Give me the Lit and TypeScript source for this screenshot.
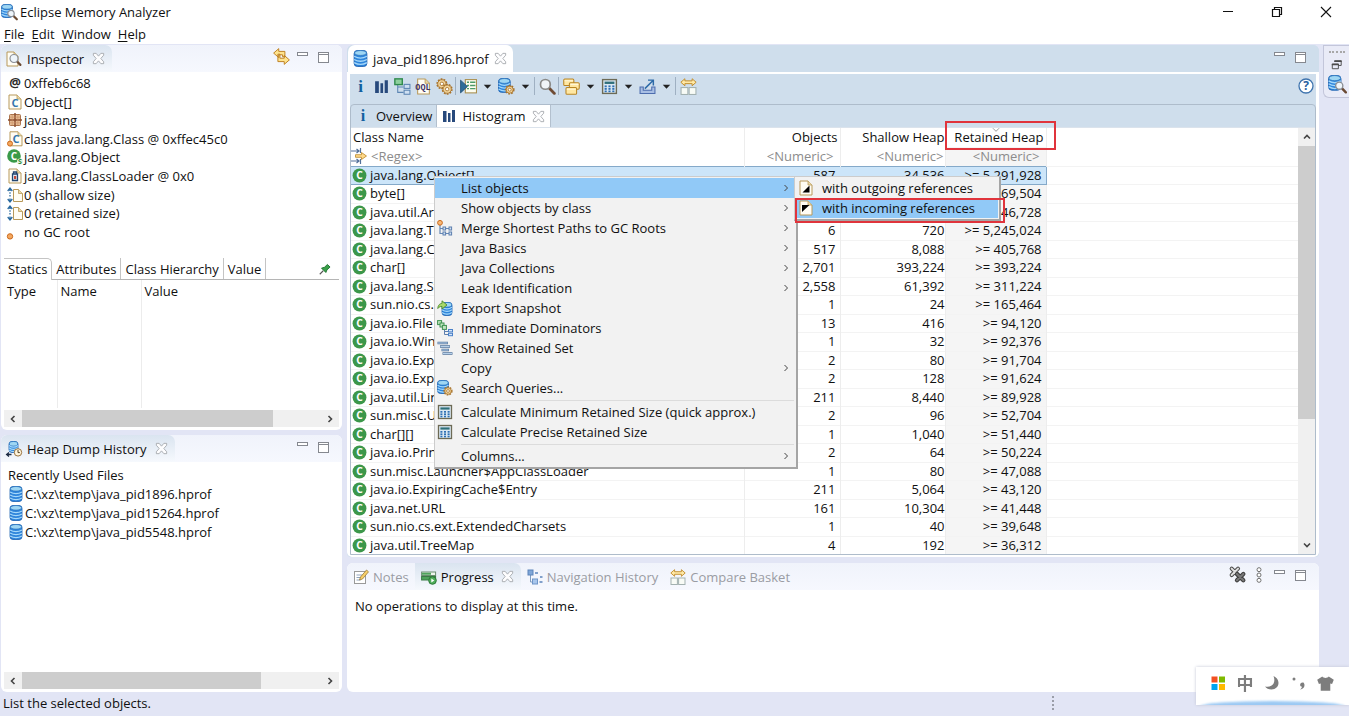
import { LitElement, html, css, svg, nothing } from "lit";
import { customElement, property } from "lit/decorators.js";

const cyl = (x: number, y: number, w: number, h: number) => svg`
  <rect x=${x} y=${y} width=${w} height=${h} rx="3" fill="#2f86dc" stroke="#1c5fae" stroke-width=".8"/>
  <ellipse cx=${x + w / 2} cy=${y + 2.3} rx=${w / 2 - 0.3} ry="2.3" fill="#9ed6f3" stroke="#2a73bd" stroke-width=".7"/>
  <path d=${`M${x} ${y + h * 0.36}q${w / 2} 3.4 ${w} 0M${x} ${y + h * 0.56}q${w / 2} 3.4 ${w} 0M${x} ${y + h * 0.76}q${w / 2} 3.4 ${w} 0`} fill="none" stroke="#a5d8fa" stroke-width="1.2"/>`;

const gear = (x: number, y: number, r: number) => svg`
  <circle cx=${x} cy=${y} r=${r} fill="none" stroke="#a8732c" stroke-width="2" stroke-dasharray="1.6 1"/>
  <circle cx=${x} cy=${y} r=${r - 0.3} fill="#f1d49a" stroke="#a8732c" stroke-width=".8"/>
  <circle cx=${x} cy=${y} r=${r / 2.6} fill="#fff" stroke="#a8732c" stroke-width=".8"/>`;

const lens = (x: number, y: number, r: number) => svg`
  <path d=${`M${x + r * 0.7} ${y + r * 0.7}l3.6 3.6`} stroke="#6b4a33" stroke-width="2.2" stroke-linecap="round"/>
  <circle cx=${x} cy=${y} r=${r} fill="#eef5fb" stroke="#8b8f96" stroke-width="1.2"/>`;

const page = (x: number, y: number, w: number, h: number) => svg`
  <path d=${`M${x} ${y}h${w - 4}l4 4v${h - 4}h-${w}z`} fill="#fffdf4" stroke="#b8995a"/>
  <path d=${`M${x + w - 4} ${y}v4h4`} fill="#ead9a8" stroke="#b8995a" stroke-width=".8"/>`;

const calc = svg`
  <rect x="1.5" y="1.5" width="13" height="13" fill="#d9e7f2" stroke="#6d6a55" stroke-width="1.3"/>
  <rect x="3.4" y="3.4" width="9.2" height="2.2" fill="#2f6f7a"/>
  <g fill="#2e6fb3"><rect x="3.4" y="7" width="2" height="1.7"/><rect x="7" y="7" width="2" height="1.7"/><rect x="10.6" y="7" width="2" height="1.7"/><rect x="3.4" y="9.4" width="2" height="1.7"/><rect x="7" y="9.4" width="2" height="1.7"/><rect x="10.6" y="9.4" width="2" height="1.7"/><rect x="3.4" y="11.8" width="2" height="1.5"/><rect x="7" y="11.8" width="2" height="1.5"/><rect x="10.6" y="11.8" width="2" height="1.5"/></g>`;

const compare = svg`
  <path d="M.8 4 4.6.7v2h6.8v-2L15.2 4l-3.8 3.3v-2H4.6v2z" fill="#ffe9a6" stroke="#bf8a2a" stroke-width=".9"/>
  <rect x="1" y="9" width="6.4" height="6.5" fill="#f8fbf6" stroke="#a3b1b0"/><rect x="8.6" y="9" width="6.4" height="6.5" fill="#f8fbf6" stroke="#a3b1b0"/>`;

const ICONS: Record<string, unknown> = {
  app: svg`${cyl(0.5, 0.5, 11, 13)}${lens(10, 9.5, 3.2)}`,
  db: svg`${cyl(2, 0.5, 12, 15)}`,
  dbGear: svg`${cyl(0.5, 0.5, 11, 13)}${gear(11, 11, 3.6)}`,
  dbExport: svg`${cyl(5, 2.5, 10, 13)}<path d="M.8 8.5C1 4.8 3 3.6 5 3.4V.8l5 4.2-5 4V6.4C3.2 6.4 2 7 .8 8.5z" fill="#a9d86a" stroke="#4c8b2c" stroke-width=".9"/>`,
  dbClock: svg`${cyl(3, 0.5, 9, 11)}<circle cx="12" cy="11.4" r="3.7" fill="#fff5dd" stroke="#9a7440"/><path d="M12 9v2.6h1.8" fill="none" stroke="#54401f"/><path d="M.5 13.5h5M3 11.4.6 13.5 3 15.6" fill="none" stroke="#1d2c44" stroke-width="1.3"/>`,
  inspect: svg`${page(1, 1, 11, 14)}${lens(8, 7.5, 4)}`,
  at: svg`<text x="8" y="12.2" text-anchor="middle" font-size="13" font-weight="700" font-family="Open Sans, sans-serif" fill="#2a2a2a">@</text>`,
  classDoc: svg`${page(2, 1, 12, 14)}<text x="8" y="12.8" text-anchor="middle" font-size="11" font-weight="700" font-family="Open Sans, sans-serif" fill="#3476ae">C</text>`,
  pkg: svg`<rect x="2.5" y="2.5" width="11" height="11" rx="1" fill="#e6bd95" stroke="#a9714a"/><path d="M8 1v14M1 8h14" stroke="#8d4f30" stroke-width="1.5"/><path d="M5.2 2.5v11M10.8 2.5v11M2.5 5.2h11M2.5 10.8h11" stroke="#c98f64" stroke-width=".6"/>`,
  classObj: svg`${page(3, 0.8, 12, 14)}<text x="9" y="12" text-anchor="middle" font-size="11" font-weight="700" font-family="Open Sans, sans-serif" fill="#3476ae">C</text><circle cx="3" cy="12.6" r="2.5" fill="#f4a860" stroke="#cc6a1c"/>`,
  superC: svg`<circle cx="7" cy="7" r="6.8" fill="#3a9a48"/><text x="7" y="10.6" text-anchor="middle" font-size="10" font-weight="700" font-family="Open Sans, sans-serif" fill="#fff">C</text><circle cx="13" cy="12.4" r="3" fill="#e4f6e0"/><text x="13" y="15" text-anchor="middle" font-size="7" font-weight="700" font-family="Open Sans, sans-serif" fill="#2f8a3d">S</text>`,
  greenC: svg`<circle cx="8" cy="8" r="7.4" fill="#3c974a"/><text x="8" y="12" text-anchor="middle" font-size="11" font-weight="700" font-family="Open Sans, sans-serif" fill="#fff">C</text>`,
  loader: svg`${page(2, 1, 12, 14)}<path d="M5.5 6h5v6.500h-5zM6.500 4h3v2h-3z" fill="#dcebf7" stroke="#23466f" stroke-width="1.300"/><rect x="7" y="8" width="2.200" height="3" fill="#c24a3a"/>`,
  size: svg`<path d="M3 1v3M3 5.200v1.600M3 8v1.600M3 11.500v3.500M.7 4 3 1l2.300 3M.7 12 3 15l2.300-3" fill="none" stroke="#2a6aa0" stroke-width="1.300"/>${page(6.5, 2.5, 9, 12)}`,
  root: svg`<circle cx="3" cy="12.400" r="2.700" fill="#f4a860" stroke="#cc6a1c"/>`,
  sync: svg`<path d="M.6 4.800 5.400.6v2.600h5.800v5H9V6.400H5.400V9zM15.400 11.200l-4.800-4.200v2.600H6.500V5.800H4.600v7h6v2.600z" fill="#ffe48e" stroke="#bd7f1d" stroke-width=".9"/>`,
  pin: svg`<path d="M2 14 6 10" stroke="#555" stroke-width="1.300"/><path d="m4 7 5 5 1.200-3 3.600-3.200-3-3L7.400 6z" fill="#3aa04a" stroke="#1c6f2c"/>`,
  min: svg`<rect x="2.500" y="3.500" width="10" height="3" fill="#fff" stroke="#85888f"/>`,
  max: svg`<rect x="2.500" y="3.500" width="10" height="10" fill="#fff" stroke="#85888f"/><path d="M2.500 5.500h10" stroke="#85888f"/>`,
  close: svg`<path d="M2.500 2.500h3L8 5.500l2.500-3h3v2L10.500 8l3 3.500v2h-3L8 10.500l-2.500 3h-3v-2l3-3.500-3-3.500z" fill="#fdfdfe" stroke="#a0a4a9" stroke-width=".9"/>`,
  info: svg`<text x="8" y="13" text-anchor="middle" font-size="16" font-weight="700" font-family="Liberation Serif, serif" fill="#12609f">i</text>`,
  bars: svg`<path d="M2 3h3.500v11H2zM7 5h2.500v9H7zM11 2h3v12h-3z" fill="#27497c"/>`,
  tree: svg`<path d="M3.500 6v7.500H9M3.500 8.500H9" fill="none" stroke="#5d86b3"/><rect x=".8" y=".8" width="7" height="5.400" fill="#8fd09d" stroke="#2f8a4c" stroke-width="1.300"/><rect x="9.500" y="6" width="5.500" height="3.800" fill="#cfe0f2" stroke="#5d86b3"/><rect x="9.500" y="11.500" width="5.500" height="3.800" fill="#cfe0f2" stroke="#5d86b3"/>`,
  oql: svg`${page(2.5, 1, 11, 14)}<text x="7.500" y="11.500" text-anchor="middle" font-size="8" font-weight="700" font-family="Liberation Mono, monospace" fill="#3d3268">OQL</text>`,
  gears: svg`${gear(5.5, 5.5, 4.2)}${gear(10.5, 10.5, 4.2)}`,
  run: svg`<rect x="5" y="1.500" width="10.500" height="12.500" fill="#fdfdf0" stroke="#a98f4e"/><path d="M6.500 4h2M9.500 4h5M6.500 7h2M9.500 7h5M6.500 10h2M9.500 10h5" stroke="#4c9a68" stroke-width="1.300"/><path d="M.5 2v12L7 8z" fill="#2f6c98" stroke="#1b4a72" stroke-width=".7"/>`,
  search: svg`<path d="m9.500 9.500 5 5" stroke="#6f4b34" stroke-width="2.600" stroke-linecap="round"/><circle cx="6" cy="6" r="4.600" fill="#f1f5f8" stroke="#8a8a88" stroke-width="1.600"/>`,
  group: svg`<g fill="#ffe7a2" stroke="#b98524"><rect x=".7" y="1" width="9.500" height="6" rx="1"/><rect x="6" y="4.500" width="9.300" height="6" rx="1"/><rect x="2.800" y="9" width="10" height="6.300" rx="1"/></g><path d="M1.500 2.500h8M7 6h7.500M3.600 10.600h8.400" stroke="#fff6d8"/>`,
  calc,
  exp: svg`<path d="M1 8.500h3v3h8v-3h3v6H1z" fill="#a9bfe4" stroke="#4d6dae"/><path d="m5.500 10 7.500-7.500M8.500 2h5v5" fill="none" stroke="#2d6aa8" stroke-width="1.400"/>`,
  compare,
  help: svg`<circle cx="8" cy="8" r="7" fill="#fff" stroke="#3f74ae" stroke-width="1.300"/><text x="8" y="12.300" text-anchor="middle" font-size="12" font-weight="700" font-family="Open Sans, sans-serif" fill="#2a62a2">?</text>`,
  filter: svg`<path d="M0 3h8M5.500 1 8 3 5.500 5M9.500 0v5M0 13h8M5.500 11 8 13l-2.500 2M9.500 11v5" fill="none" stroke="#54719b" stroke-width="1.200"/><path d="M4.500 6.700h6V4.500L15.500 8l-5 3.500V9.300h-6z" fill="#ffd98a" stroke="#b98524" stroke-width=".8"/>`,
  merge: svg`<path d="M3 5v8.500h11M3 8.500h11" fill="none" stroke="#6487b5" stroke-width="1.200"/><g fill="#cfe0f2" stroke="#5d7fae"><rect x="6" y="7" width="2.600" height="3"/><rect x="12" y="7" width="2.600" height="3"/><rect x="6" y="12" width="2.600" height="3"/><rect x="12" y="12" width="2.600" height="3"/></g><circle cx="3" cy="2.800" r="2.400" fill="#f7b877" stroke="#cc6a1c"/>`,
  dominators: svg`<g fill="#bfe6bf" stroke="#3d9150"><rect x=".6" y=".6" width="4" height="4"/><rect x="3" y="3" width="4" height="4"/><rect x="5.400" y="5.400" width="4" height="4"/></g><path d="M7.500 9.500v5H11M7.500 11.500H11" fill="none" stroke="#5d7fae"/><g fill="#d5e6fa" stroke="#4a80c8"><rect x="11.500" y="9.500" width="4" height="2.400"/><rect x="11.500" y="13.300" width="4" height="2.400"/></g>`,
  retained: svg`<path d="M.5 3h10.500M3 6.500h10M4.500 10h7.500M5.500 13.500h10" stroke="#54759d" stroke-width="2.600"/><path d="M1 3h9.500M3.500 6.500h9M5 10h6.500M6 13.500h9" stroke="#b5d0ea" stroke-width="1"/>`,
  outgoing: svg`${page(2, 1, 12, 14)}<path d="M11.500 5.500v7h-7z" fill="#000"/>`,
  incoming: svg`${page(2, 1, 12, 14)}<path d="M4 5h7.500L4 12z" fill="#000"/>`,
  notes: svg`<rect x="1.500" y="2.500" width="11" height="12" fill="#fff" stroke="#9a9a9a"/><path d="M3.500 6h6M3.500 8.500h5M3.500 11h4" stroke="#8fa3bd"/><path d="m6.500 11 1-3L13.500 1l2 1.800L9.500 10z" fill="#f7cf6a" stroke="#9a7a35" stroke-width=".8"/>`,
  progress: svg`<rect x=".6" y="3" width="14" height="3.500" fill="#eef6ee" stroke="#6b8d70"/><rect x=".6" y="7.500" width="14" height="3.500" fill="#4fa35c" stroke="#3a7b46"/><path d="M1 4.700h9" stroke="#4fa35c" stroke-width="2"/><circle cx="11.500" cy="11.500" r="3.800" fill="#4fae5a" stroke="#2c7a38"/><path d="M10.300 9.500v4l3-2z" fill="#fff"/>`,
  nav: svg`<path d="M3.500 4v9H7" fill="none" stroke="#7f9cc0"/><rect x="1" y="1" width="5" height="5" fill="#7fa6d8" stroke="#5c84ba"/><rect x="5.500" y="10" width="5" height="5" fill="#a8c6ec" stroke="#6f95c8"/><path d="M8 4h3M13 8h2.500M12.500 13h3" stroke="#5c84ba" stroke-width="1.500"/>`,
  clearAll: svg`<g stroke-linecap="round" fill="none"><path d="m2.500 2.500 6 6M8.500 2.500l-6 6" stroke="#4d4d4d" stroke-width="3.800"/><path d="m2.500 2.500 6 6M8.500 2.500l-6 6" stroke="#e0e0e0" stroke-width="1.900"/><path d="m7.500 7.500 6 6M13.500 7.500l-6 6" stroke="#3f3f3f" stroke-width="4"/><path d="m7.500 7.500 6 6M13.500 7.500l-6 6" stroke="#787878" stroke-width="2"/></g>`,
  dots: svg`<g fill="#fff" stroke="#707070"><circle cx="8" cy="2.700" r="2"/><circle cx="8" cy="8" r="2"/><circle cx="8" cy="13.300" r="2"/></g>`,
  restoreSmall: svg`<path d="M6 4h7v5h-3M3.500 7.500h6.500v5H3.500z" fill="none" stroke="#4c4c4c"/><path d="M5.500 4.500h8M3 8h7.500" stroke="#4c4c4c" stroke-width="1.800"/>`,
  winMin: svg`<path d="M3 7.500h10" stroke="#111"/>`,
  winMax: svg`<path d="M3.500 5.500h7v7h-7zM5.500 5V3.500h7v7H11" fill="none" stroke="#111" stroke-width="1.200"/>`,
  winClose: svg`<path d="m3 3 10 10M13 3 3 13" stroke="#111" stroke-width="1.100"/>`,
  left: svg`<path d="M9.500 5 6.500 8l3 3" fill="none" stroke="#444" stroke-width="1.600"/>`,
  right: svg`<path d="m6.500 5 3 3-3 3" fill="none" stroke="#444" stroke-width="1.600"/>`,
  up: svg`<path d="m5 9.500 3-3 3 3" fill="none" stroke="#444" stroke-width="1.600"/>`,
  down: svg`<path d="m5 6.500 3 3 3-3" fill="none" stroke="#444" stroke-width="1.600"/>`,
  sub: svg`<path d="m6.500 5 3 3-3 3" fill="none" stroke="#444"/>`,
  drop: svg`<path d="M4 6h8l-4 4.500z" fill="#222"/>`,
  sort: svg`<path d="m4.500 6 3.500 3.500L11.500 6" fill="none" stroke="#8a8a8a"/>`,
  squares: svg`<path d="M1.500 1.500h6v6h-6z" fill="#f25022"/><path d="M9 1.500h6v6H9z" fill="#7fba00"/><path d="M1.500 9h6v6h-6z" fill="#00a4ef"/><path d="M9 9h6v6H9z" fill="#ffb900"/>`,
  moon: svg`<path d="M9.500 1c7 3 7 13-2 13.500-3 0-5-1-6.500-3 8 1.500 11-4.500 8.500-10.500z" fill="#7d7d7d"/>`,
  comma: svg`<circle cx="3" cy="4" r="1.500" fill="#7d7d7d"/><path d="M12.500 7.500c2.500 3 0 7-3.500 7 1.500-1 2-1.800 1.800-2.900-3-.6-1.700-5 1.700-4.100z" fill="#7d7d7d"/>`,
  shirt: svg`<path d="M5 1.500c1.500 1.800 4.500 1.800 6 0l4.800 3-1.600 4-1.700-.6v7h-9v-7l-1.700.6-1.600-4z" fill="#7d7d7d"/>`,
};

const icon = (name: string, size = 16) =>
  html`<svg class="ico" width=${size} height=${size} viewBox="0 0 16 16" aria-hidden="true">${ICONS[name]}</svg>`;

const base = css`
  * { box-sizing: border-box; }
  .ico { display: block; flex: none; overflow: visible; }
  button {
    font: inherit; color: inherit; background: none; border: 0; padding: 0; margin: 0;
    display: flex; align-items: center; white-space: nowrap;
  }
`;

@customElement("scroll-track")
export class ScrollTrack extends LitElement {
  @property({ type: Boolean, reflect: true }) vertical = false;
  @property({ type: Number }) size = 50;

  static styles = [base, css`
    :host { display: flex; height: 17px; flex: none; background: #f0f0f0; }
    :host([vertical]) { flex-direction: column; width: 17px; height: auto; }
    button { width: 18px; height: 17px; justify-content: center; flex: none; }
    :host([vertical]) button { width: 17px; height: 18px; }
    .lane { flex: 1; min-width: 0; min-height: 0; }
    .thumb { background: #cdcdcd; width: 100%; height: 100%; }
  `];

  render() {
    const style = this.vertical ? `height:${this.size}%` : `width:${this.size}%`;
    return html`
      <button aria-label="Scroll back">${icon(this.vertical ? "up" : "left")}</button>
      <div class="lane"><div class="thumb" style=${style}></div></div>
      <button aria-label="Scroll forward">${icon(this.vertical ? "down" : "right")}</button>`;
  }
}

type Row = [string, string, string, string];
const ROWS: Row[] = [
  ["java.lang.Object[]", "587", "34,536", "5,291,928"],
  ["byte[]", "1,204", "69,504", "5,269,504"],
  ["java.util.ArrayList", "42", "1,008", "5,246,728"],
  ["java.lang.Thread", "6", "720", "5,245,024"],
  ["java.lang.Class", "517", "8,088", "405,768"],
  ["char[]", "2,701", "393,224", "393,224"],
  ["java.lang.String", "2,558", "61,392", "311,224"],
  ["sun.nio.cs.ext.GBK", "1", "24", "165,464"],
  ["java.io.File", "13", "416", "94,120"],
  ["java.io.WinNTFileSystem", "1", "32", "92,376"],
  ["java.io.ExpiringCache", "2", "80", "91,704"],
  ["java.io.ExpiringCache$1", "2", "128", "91,624"],
  ["java.util.LinkedHashMap$Entry", "211", "8,440", "89,928"],
  ["sun.misc.URLClassPath", "2", "96", "52,704"],
  ["char[][]", "1", "1,040", "51,440"],
  ["java.io.PrintStream", "2", "64", "50,224"],
  ["sun.misc.Launcher$AppClassLoader", "1", "80", "47,088"],
  ["java.io.ExpiringCache$Entry", "211", "5,064", "43,120"],
  ["java.net.URL", "161", "10,304", "41,448"],
  ["sun.nio.cs.ext.ExtendedCharsets", "1", "40", "39,648"],
  ["java.util.TreeMap", "4", "192", "36,312"],
];

interface Item { label?: string; icon?: string; sub?: boolean; active?: boolean; }
const MENU: Item[] = [
  { label: "List objects", sub: true, active: true },
  { label: "Show objects by class", sub: true },
  { label: "Merge Shortest Paths to GC Roots", icon: "merge", sub: true },
  { label: "Java Basics", sub: true },
  { label: "Java Collections", sub: true },
  { label: "Leak Identification", sub: true },
  { label: "Export Snapshot", icon: "dbExport" },
  { label: "Immediate Dominators", icon: "dominators" },
  { label: "Show Retained Set", icon: "retained" },
  { label: "Copy", sub: true },
  { label: "Search Queries...", icon: "dbGear" },
  {},
  { label: "Calculate Minimum Retained Size (quick approx.)", icon: "calc" },
  { label: "Calculate Precise Retained Size", icon: "calc" },
  {},
  { label: "Columns...", sub: true },
];

const INSPECT: [string, string][] = [
  ["at", "0xffeb6c68"],
  ["classDoc", "Object[]"],
  ["pkg", "java.lang"],
  ["classObj", "class java.lang.Class @ 0xffec45c0"],
  ["superC", "java.lang.Object"],
  ["loader", "java.lang.ClassLoader @ 0x0"],
  ["size", "0 (shallow size)"],
  ["size", "0 (retained size)"],
  ["root", "no GC root"],
];

const FILES = ["C:\\xz\\temp\\java_pid1896.hprof", "C:\\xz\\temp\\java_pid15264.hprof", "C:\\xz\\temp\\java_pid5548.hprof"];

// "|" is a separator; a trailing "+" adds a drop-down arrow.
const TOOLS = ["info", "bars", "tree", "oql", "gears", "|", "run+", "dbGear+", "|", "search", "|", "group+", "calc+", "exp+", "|", "compare"];

@customElement("app-root")
export class AppRoot extends LitElement {
  static styles = [base, css`
    :host {
      display: flex; flex-direction: column; height: 100vh; overflow: hidden;
      font: 13px/18px "Open Sans", "Noto Sans", sans-serif; color: #101010; background: #e2e5f5;
    }
    .titlebar { display: flex; align-items: center; height: 24px; background: #fff; flex: none; padding-left: 1px; gap: 3px; }
    .titlebar h1 { font: inherit; margin: 0; flex: 1; }
    .titlebar .ctl { width: 46px; height: 24px; justify-content: center; }
    .menubar { display: flex; gap: 7px; height: 20px; background: #fff; flex: none; padding-left: 4px; }
    .menubar u { text-underline-offset: 2px; }
    .work { flex: 1; min-height: 0; display: grid; grid-template-columns: 343px minmax(0, 1fr) 26px; column-gap: 4px; padding-top: 1px; }
    .left { display: grid; grid-template-rows: minmax(0, 385fr) minmax(0, 257fr); row-gap: 5px; min-height: 0; padding: 0 1px; }
    .main { display: grid; grid-template-rows: minmax(0, 512fr) minmax(0, 129fr); row-gap: 6px; min-height: 0; }
    .panel { display: flex; flex-direction: column; min-height: 0; background: #fff; border-radius: 6px; overflow: hidden; }
    .tabs { display: flex; height: 27px; flex: none; align-items: stretch; background: linear-gradient(#f0f3fb, #f6f8fe); }
    .tab { display: flex; align-items: center; padding: 0 6px; color: #9a9ca3; gap: 4px; }
    .tab.on { color: #101010; border-radius: 0 7px 0 0; background: linear-gradient(#dae4f0, #f6f9fd); }
    .tab .close { margin-left: 2px; }
    .left .tab { padding-left: 5px; gap: 5px; }
    .fill { flex: 1; }
    .winbtns { display: flex; align-items: center; gap: 5px; padding: 0 10px 4px 0; }
    .facts { display: grid; grid-template-rows: repeat(9, 1fr); height: 167px; flex: none; margin: 2px 0 0; padding: 0 0 0 6px; list-style: none; }
    .facts li, .files li { display: flex; align-items: center; gap: 1px; white-space: nowrap; }
    .facts li { padding-right: 4px; }
    .subtabs { display: flex; flex: none; height: 22px; margin: 17px 3px 0; border-bottom: 1px solid #b5b5b5; }
    .subtabs button { padding: 0 4px; border-right: 1px solid #c4c4c4; }
    .subtabs button.on { margin-bottom: -1px; padding-bottom: 2px; background: #fff; border-top: 1px solid #c4c4c4; border-radius: 0 5px 0 0; }
    .subtabs .pin { border: 0; padding-right: 7px; }
    .attrs { flex: 1; min-height: 0; margin: 0 3px; display: flex; }
    .attrs table { border-collapse: collapse; width: 100%; height: 100%; table-layout: fixed; }
    .attrs th { font-weight: 400; text-align: left; vertical-align: top; padding: 2px 3px 0; border-right: 1px solid #ececec; }
    .attrs th:last-child { border: 0; }
    .attrs .c1 { width: 53px; }
    .attrs .c2 { width: 84px; }
    .panel > scroll-track { margin: 2px 3px 3px; }
    .history { flex: 1; padding: 4px 7px 0; min-height: 0; }
    .files { display: grid; grid-auto-rows: 1fr; height: 56px; margin: 1px 0 0; padding: 0; list-style: none; }
    .editor { background: #cfdeec; border-radius: 6px 6px 4px 4px; }
    .etabs { display: flex; height: 27px; flex: none; background: #cfdeec; }
    .etab { display: flex; align-items: center; background: #fff; border-radius: 7px 7px 0 0; padding: 0 5px 0 4px; gap: 4px; margin-left: 1px; }
    .ebody { flex: 1; min-height: 0; display: flex; flex-direction: column; border: 2px solid #fff; border-left-width: 3px; border-right-width: 3px; border-radius: 0 0 5px 5px; }
    .toolbar { display: flex; align-items: center; height: 30px; flex: none; padding: 0 0 6px 0; }
    .toolbar button { width: 21px; height: 22px; justify-content: center; }
    .toolbar button.dd { width: 17px; }
    .rule { width: 3px; height: 18px; flex: none; border-left: 1px solid #9fb0c2; }
    .ibox { flex: 1; min-height: 0; display: flex; flex-direction: column; border: 1px solid #aebccb; border-radius: 4px 4px 0 0; }
    .itabs { display: flex; height: 22px; flex: none; }
    .itab { display: flex; align-items: center; gap: 5px; padding: 0 4px; border-right: 1px solid #b3c0ce; }
    .itab.on { background: #fff; }
    .hist { position: relative; flex: 1; min-height: 0; display: flex; background: #fff; border-top: 1px solid #dbe3ec; }
    .grid { flex: 1; min-width: 0; }
    .grid table { width: 100%; height: 100%; border-collapse: collapse; table-layout: fixed; }
    .grid thead tr { height: 19px; }
    .grid th, .grid td { font-weight: 400; padding: 0 4px 0 0; text-align: right; white-space: nowrap; overflow: hidden; border-right: 1px solid #ededed; line-height: 17px; }
    .grid th { padding-right: 2px; overflow: visible; }
    .grid .tight { padding-right: 0; }
    .grid .num { padding-right: 1px; }
    .grid .num.tight { padding-right: 0; }
    .grid .tight input { padding-right: 1px; }
    .grid .name { text-align: left; padding: 0 0 0 2px; }
    .grid .name.cls { padding-left: 1px; }
    .grid .ret { background: #f5f5f5; position: relative; }
    .grid th.ret { background: #fff; z-index: 1; }
    .grid .rest { border-right: 0; }
    .grid tbody td { border-top: 1px solid #f3f3f3; }
    .grid tr.sel td { background: #cce5f9; border-top: 1px solid #84a9c9; border-bottom: 1px solid #84a9c9; border-right-color: #cce5f9; }
    .grid tr.sel td.ret { border-right-color: #84a9c9; }
    .grid tr.sel td.rest { background: #fff; border-color: #f3f3f3; }
    .cell { display: flex; align-items: center; gap: 3px; }
    .cell.f { gap: 4px; }
    .cell.f .ico { margin-left: -2px; }
    input { font: inherit; line-height: 17px; height: 17px; border: 0; padding: 0; margin: 0; width: 100%; background: transparent; color: #8c8c8c; outline: 0; display: block; }
    input::placeholder { color: #8c8c8c; opacity: 1; }
    .num input { text-align: right; padding-right: 5px; }
    .w1 { width: 393px; } .w2 { width: 96px; } .w3 { width: 105px; } .w4 { width: 101px; }
    .sort { position: absolute; left: 43px; top: -5px; }
    .mark { position: absolute; border: 2px solid #e0343c; pointer-events: none; }
    .mark.head { inset: -7px -10px -3px -1px; }
    .menu { position: absolute; left: 83px; top: 48px; width: 364px; background: #f2f2f2; border: 1px solid #ccc; border-right: 2px solid #a5a5a5; border-bottom: 2px solid #a5a5a5; padding: 1px 2px 1px 0; z-index: 2; }
    .item { width: 100%; height: 20px; text-align: left; }
    .item .slot { width: 26px; padding-left: 2px; flex: none; }
    .item.on { background: #91c9f7; }
    .sep { height: 4px; display: flex; align-items: center; padding-left: 26px; }
    .sep::before { content: ""; flex: 1; height: 1px; background: #dcdcdc; }
    .menu.sub { left: 443px; width: 207px; z-index: 3; padding: 1px; }
    .mark.pick { inset: 21px -6px -4px 0; }
    .idle { margin: 0; padding: 7px 8px; }
    .trim { height: 53px; border: 1px solid #c3c6da; border-right: 0; border-radius: 0 0 0 6px; background: #e9ebf7; display: flex; flex-direction: column; align-items: center; gap: 3px; padding: 5px 0 0; overflow: hidden; }
    .grip { width: 16px; height: 3px; border-top: 2px dotted #a8a8a8; flex: none; }
    .status { flex: none; height: 24px; display: flex; align-items: center; padding: 0 0 2px 3px; }
    .status .vgrip { margin-left: auto; margin-right: 295px; width: 2px; height: 14px; border-left: 2px dotted #9a9da8; }
    .ime { position: fixed; right: 0; bottom: 11px; width: 153px; height: 38px; background: #fff; box-shadow: 0 0 3px #c3c6d6; display: flex; align-items: center; padding: 0 15px 6px 14px; color: #7d7d7d; z-index: 4; overflow: hidden; justify-content: space-between; }
    .ime b { font: 700 17px/18px "Noto Sans CJK SC", sans-serif; }
    .ime::after { content: ""; position: absolute; left: 4px; right: 4px; bottom: -7px; height: 11px; border-radius: 50%; background: #9cc9f3; filter: blur(1px); }
  `];

  winButtons() {
    return html`<button aria-label="Minimize">${icon("min")}</button><button aria-label="Maximize">${icon("max")}</button>`;
  }

  closeButton(label: string) {
    return html`<button class="close" aria-label="Close ${label}">${icon("close", 15)}</button>`;
  }

  menuItem(it: Item) {
    if (!it.label) return html`<div class="sep" role="separator"></div>`;
    return html`<button class="item ${it.active ? "on" : ""}" role="menuitem">
      <span class="slot">${it.icon ? icon(it.icon) : nothing}</span>${it.label}
      ${it.sub ? html`<span class="fill"></span>${icon("sub")}` : nothing}</button>`;
  }

  tool(name: string) {
    if (name === "|") return html`<span class="rule"></span>`;
    const key = name.replace("+", "");
    return html`<button aria-label=${key}>${icon(key, 17)}</button>${name.endsWith("+")
      ? html`<button class="dd" aria-label="${key} options">${icon("drop", 15)}</button>` : nothing}`;
  }

  histogram() {
    return html`<div class="hist">
      <div class="grid"><table>
        <colgroup><col class="w1"><col class="w2"><col class="w3"><col class="w4"><col></colgroup>
        <thead>
          <tr><th class="name">Class Name</th><th>Objects</th><th class="tight">Shallow Heap</th>
            <th class="ret"><span class="sort">${icon("sort", 14)}</span>Retained Heap<span class="mark head"></span></th><th class="rest"></th></tr>
          <tr><td class="name"><span class="cell f">${icon("filter")}<input aria-label="Class name filter" placeholder="<Regex>"></span></td>
            <td class="num"><input aria-label="Objects filter" placeholder="<Numeric>"></td>
            <td class="num tight"><input aria-label="Shallow heap filter" placeholder="<Numeric>"></td>
            <td class="num ret"><input aria-label="Retained heap filter" placeholder="<Numeric>"></td><td class="rest"></td></tr>
        </thead>
        <tbody>${ROWS.map((r, i) => html`<tr class=${i === 0 ? "sel" : ""}>
          <td class="name cls"><span class="cell">${icon("greenC", 15)}${r[0]}</span></td>
          <td>${r[1]}</td><td class="tight">${r[2]}</td><td class="ret">&gt;= ${r[3]}</td><td class="rest"></td></tr>`)}</tbody>
      </table></div>
      <scroll-track vertical .size=${70}></scroll-track>
      <div class="menu" role="menu">${MENU.map((m) => this.menuItem(m))}</div>
      <div class="menu sub" role="menu">
        ${this.menuItem({ label: "with outgoing references", icon: "outgoing" })}
        ${this.menuItem({ label: "with incoming references", icon: "incoming", active: true })}
        <span class="mark pick"></span>
      </div>
    </div>`;
  }

  render() {
    return html`
      <header class="titlebar">${icon("app")}<h1>Eclipse Memory Analyzer</h1>
        <button class="ctl" aria-label="Minimize window">${icon("winMin")}</button>
        <button class="ctl" aria-label="Restore window">${icon("winMax")}</button>
        <button class="ctl" aria-label="Close window">${icon("winClose")}</button></header>
      <nav class="menubar">${["File", "Edit", "Window", "Help"].map((m) => html`<button><span><u>${m[0]}</u>${m.slice(1)}</span></button>`)}</nav>
      <div class="work">
        <div class="left">
          <section class="panel">
            <div class="tabs"><div class="tab on">${icon("inspect")}<span>Inspector</span>${this.closeButton("Inspector")}</div>
              <span class="fill"></span><div class="winbtns"><button aria-label="Link with snapshot">${icon("sync", 17)}</button>${this.winButtons()}</div></div>
            <ul class="facts">${INSPECT.map(([i, t]) => html`<li>${icon(i)}<span>${t}</span></li>`)}</ul>
            <div class="subtabs"><button class="on">Statics</button><button>Attributes</button><button>Class Hierarchy</button><button>Value</button>
              <span class="fill"></span><button class="pin" aria-label="Pin">${icon("pin", 14)}</button></div>
            <div class="attrs"><table><colgroup><col class="c1"><col class="c2"><col></colgroup>
              <tr><th>Type</th><th>Name</th><th>Value</th></tr></table></div>
            <scroll-track .size=${84}></scroll-track>
          </section>
          <section class="panel">
            <div class="tabs"><div class="tab on">${icon("dbClock")}<span>Heap Dump History</span>${this.closeButton("Heap Dump History")}</div>
              <span class="fill"></span><div class="winbtns">${this.winButtons()}</div></div>
            <div class="history"><div>Recently Used Files</div>
              <ul class="files">${FILES.map((f) => html`<li>${icon("db", 16)}<span>${f}</span></li>`)}</ul></div>
            <scroll-track .size=${80}></scroll-track>
          </section>
        </div>
        <div class="main">
          <section class="panel editor">
            <div class="etabs"><div class="etab">${icon("db", 17)}<span>java_pid1896.hprof</span>${this.closeButton("java_pid1896.hprof")}</div>
              <span class="fill"></span><div class="winbtns">${this.winButtons()}</div></div>
            <div class="ebody">
              <div class="toolbar">${TOOLS.map((t) => this.tool(t))}<span class="fill"></span><button aria-label="Help">${icon("help", 16)}</button></div>
              <div class="ibox">
                <div class="itabs"><div class="itab">${icon("info")}<span>Overview</span></div>
                  <div class="itab on">${icon("bars")}<span>Histogram</span>${this.closeButton("Histogram")}</div></div>
                ${this.histogram()}
              </div>
            </div>
          </section>
          <section class="panel">
            <div class="tabs"><div class="tab">${icon("notes")}<span>Notes</span></div>
              <div class="tab on">${icon("progress")}<span>Progress</span>${this.closeButton("Progress")}</div>
              <div class="tab">${icon("nav")}<span>Navigation History</span></div>
              <div class="tab">${icon("compare")}<span>Compare Basket</span></div>
              <span class="fill"></span><div class="winbtns"><button aria-label="Remove all finished operations">${icon("clearAll", 17)}</button><button aria-label="View menu">${icon("dots")}</button>${this.winButtons()}</div></div>
            <p class="idle">No operations to display at this time.</p>
          </section>
        </div>
        <aside class="trim"><span class="grip"></span><button aria-label="Restore">${icon("restoreSmall", 15)}</button><button aria-label="Memory Analysis">${icon("app", 18)}</button></aside>
      </div>
      <footer class="status"><span>List the selected objects.</span><span class="vgrip"></span></footer>
      <div class="ime">${icon("squares")}<b>中</b>${icon("moon")}${icon("comma")}${icon("shirt", 17)}</div>`;
  }
}
